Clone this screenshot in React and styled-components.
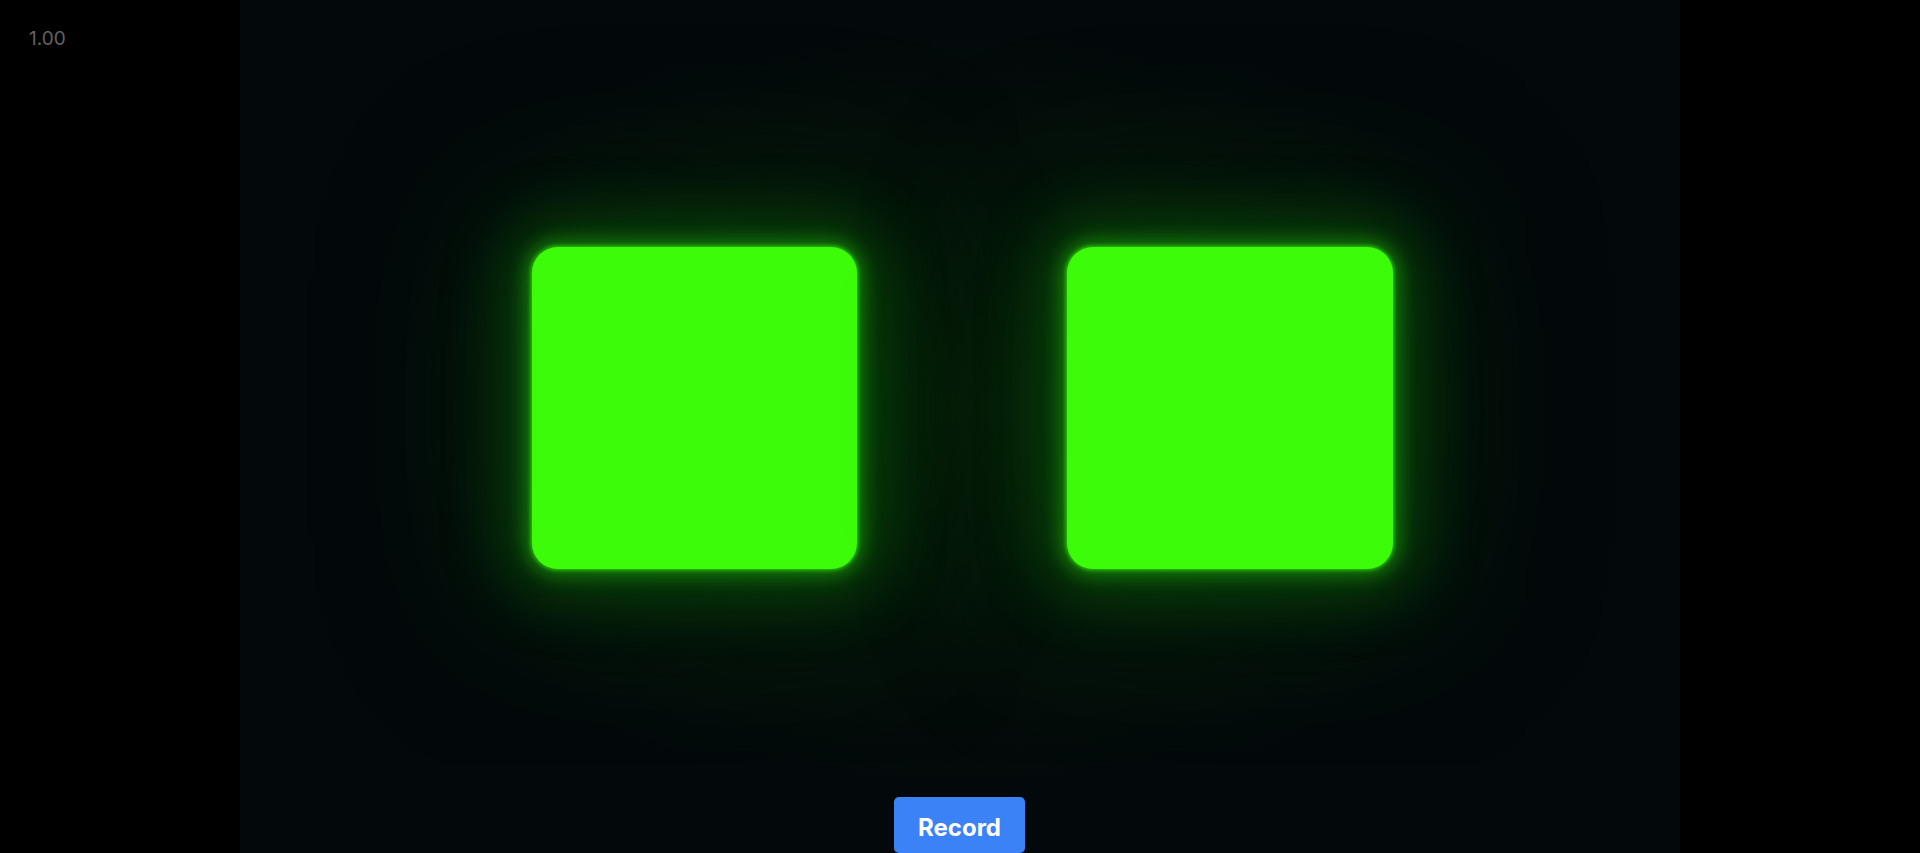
import React from 'react';
import styled, { createGlobalStyle } from 'styled-components';

const GlobalStyle = createGlobalStyle`
  html, body {
    margin: 0;
    padding: 0;
    background: #000;
    overflow: hidden;
  }
  * {
    box-sizing: border-box;
  }
`;

const Page = styled.div`
  display: flex;
  width: 100%;
  height: 100vh;
  background: #000;
  font-family: Inter, "Liberation Sans", sans-serif;
`;

const Side = styled.div`
  width: 240px;
  flex-shrink: 0;
  padding: 25px 0 0 29px;
`;

const Rate = styled.span`
  font-size: 19px;
  line-height: 28px;
  color: #626262;
`;

const Stage = styled.div`
  width: 1440px;
  flex-shrink: 0;
  height: 100%;
  overflow: hidden;
  display: flex;
  flex-direction: column;
  align-items: center;
  background:
    radial-gradient(ellipse 40% 48% at 50% 48%, rgba(8, 38, 8, 0.5), rgba(3, 8, 9, 0) 100%),
    #03080a;
`;

const Scene = styled.div`
  width: 100%;
  height: 797px;
  flex-shrink: 0;
  padding: 247px 0 0 4px;
  display: flex;
  justify-content: center;
  gap: 210px;
`;

const Light = styled.div`
  width: ${(props) => props.w}px;
  height: 322px;
  border-radius: 26px;
  background: #3cfc0a;
  box-shadow:
    0 0 4px 1px rgba(60, 252, 10, 0.7),
    0 0 18px 7px rgba(40, 200, 10, 0.45),
    0 0 60px 28px rgba(10, 110, 10, 0.45),
    0 0 150px 60px rgba(5, 55, 8, 0.4);
`;

const Button = styled.button`
  flex-shrink: 0;
  width: 131px;
  height: 56px;
  margin-left: -1px;
  border: none;
  border-radius: 5px;
  background: #3b82f6;
  color: #fff;
  font-family: Inter, "Liberation Sans", sans-serif;
  font-weight: 700;
  font-size: 24px;
  line-height: 32px;
  padding: 5px 0 0;
  cursor: pointer;
`;

const Filler = styled.div`
  flex: 1;
  background: #000;
`;

export default function App() {
  return (
    <>
      <GlobalStyle />
      <Page>
        <Side>
          <Rate>1.00</Rate>
        </Side>
        <Stage>
          <Scene>
            <Light w={325} />
            <Light w={326} />
          </Scene>
          <Button>Record</Button>
        </Stage>
        <Filler />
      </Page>
    </>
  );
}
